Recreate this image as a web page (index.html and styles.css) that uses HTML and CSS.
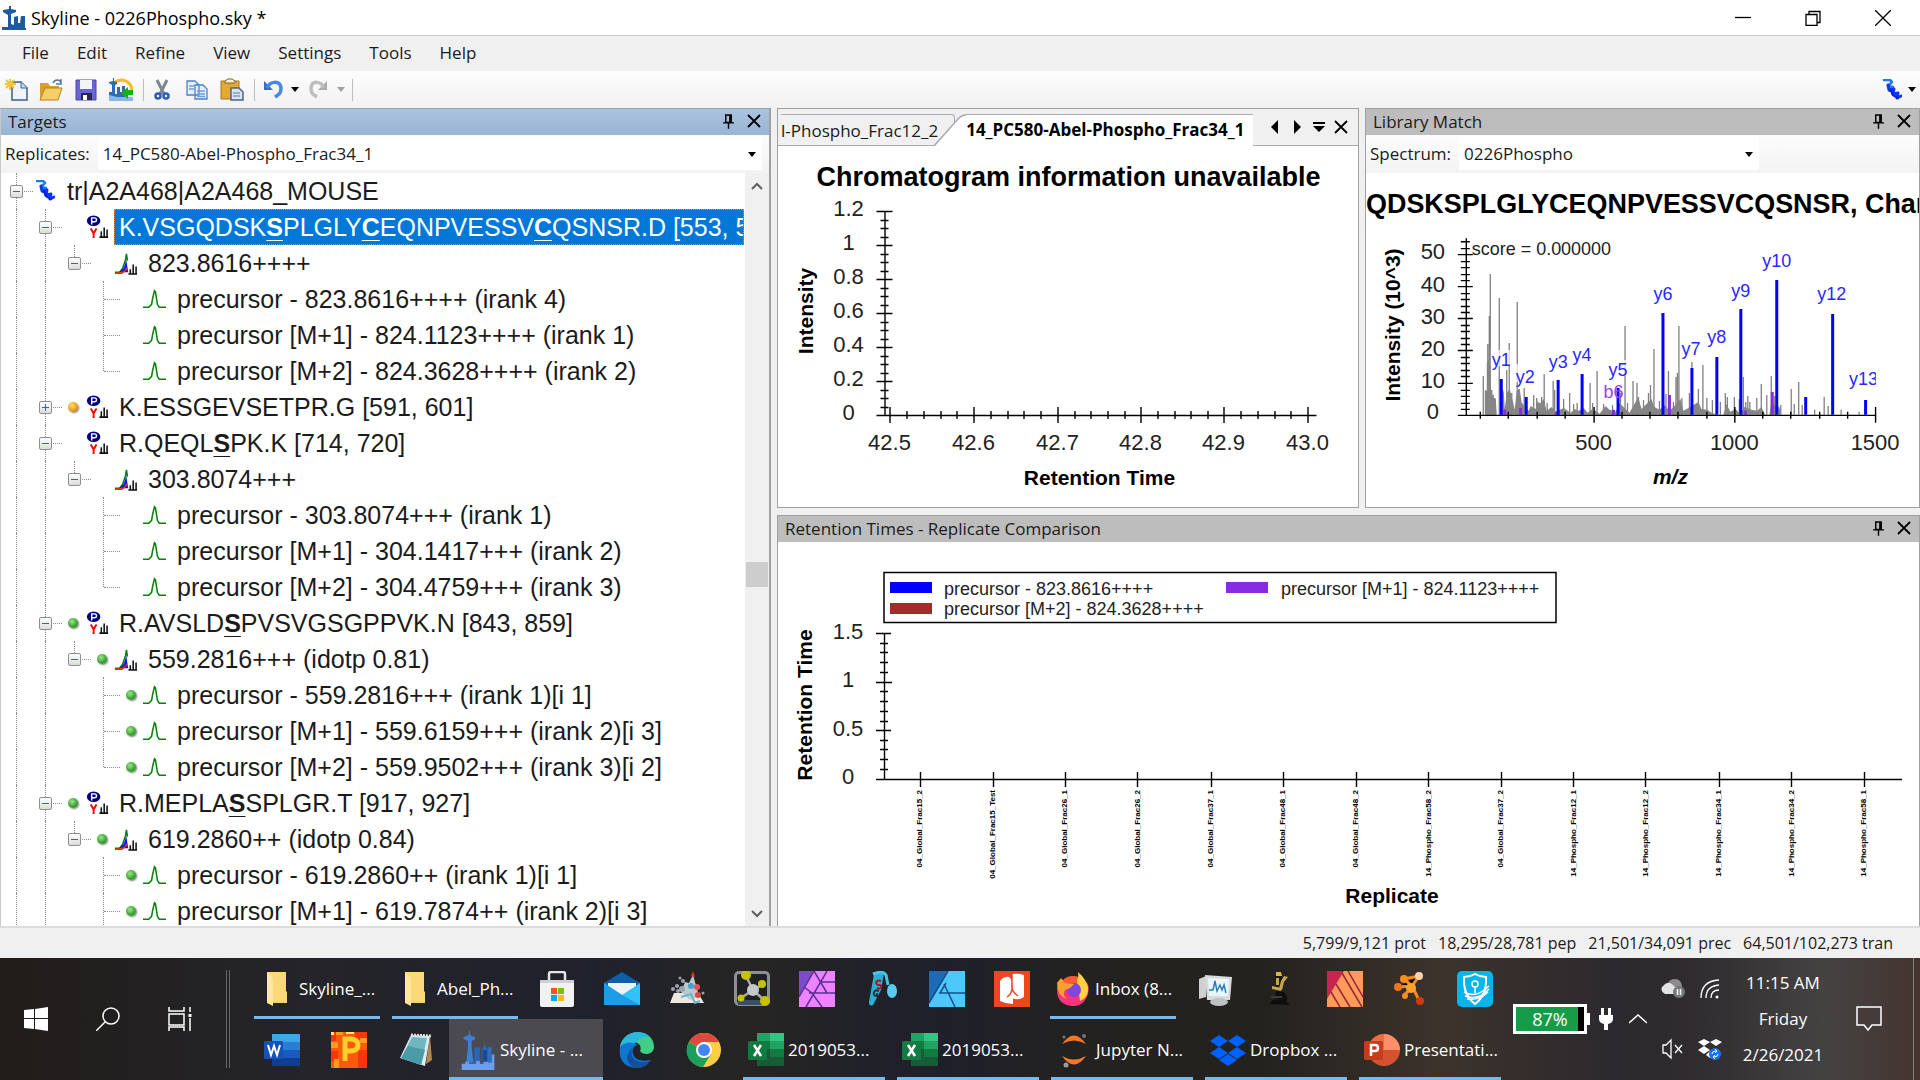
FILE: index.html
```html
<!DOCTYPE html>
<html lang="en">
<head>
    <meta charset="UTF-8">
    <meta name="viewport" content="width=device-width, initial-scale=1.0">
    <title>Skyline - 0226Phospho.sky</title>
    <link rel="stylesheet" href="styles.css">
</head>
<body>
    <!-- shared icons -->
    <svg class="defs" aria-hidden="true">
        <symbol id="skyline" viewBox="0 0 36 44">
            <path d="M8 1h1v3l1 2 5 2v2l-4 2v7l2 17H5l2-17v-7l-5-2V8l5-2 1-2z" fill="#3f7fd0"/>
            <path d="M14 19h6v18h-6zM22 22l2-4 1-3 1 3 4 4v14h-8z" fill="#2c66b8"/>
            <path d="M23 22h5v14h-5z" fill="#1b4c92"/>
            <path d="M0 37h4v-2h4v2h8v-3h4v3h4v-2h9v-8h3v17H0z" fill="#6d9ce8"/>
            <path d="M29 19h4v17h-4z" fill="#2e6fc4"/>
        </symbol>
        <symbol id="protein" viewBox="0 0 20 22">
            <path d="M2 1h6l2 2-4 4 5 1-3 4" fill="none" stroke="#1f7bea" stroke-width="2.500" stroke-linejoin="round" stroke-linecap="round"/>
            <path d="M6 6l1 5 5-1-1 5 5-1-1 5 4-2" fill="none" stroke="#0d36f0" stroke-width="3" stroke-linejoin="round" stroke-linecap="round"/>
            <path d="M9 11l2 5 5 3" fill="none" stroke="#0a22d8" stroke-width="2.500" stroke-linecap="round"/>
        </symbol>
        <symbol id="peptide" viewBox="0 0 24 26">
            <ellipse cx="9" cy="6" rx="7" ry="5.500" fill="#00007f"/>
            <path d="M7 10V3h3a2 2 0 0 1 0 4H7" fill="none" stroke="#fff" stroke-width="1.500"/>
            <path d="M6 14l3 5 3-5M9 19v5" fill="none" stroke="#f00" stroke-width="2"/>
            <path d="M15 23h9M17 23v-6M20 23V13M23 23v-8" stroke="#111" stroke-width="1.600"/>
        </symbol>
        <symbol id="precursor" viewBox="0 0 24 26">
            <path d="M1 22h5l3-4 3-9 1-6 1 7" fill="none" stroke="#0a800a" stroke-width="1.600"/>
            <path d="M5 22l5-4 3-9 1 9 1 4z" fill="#1414ff"/>
            <path d="M1 23h7l3-2 3-4" fill="none" stroke="#e03000" stroke-width="1.600"/>
            <path d="M15 24h9M17 24v-5M20 24V14M23 24v-8" stroke="#111" stroke-width="1.600"/>
        </symbol>
        <symbol id="transition" viewBox="0 0 26 22">
            <path d="M1 19h6l3-3 1-6 2-8 1 1 2 13 2 3h7" fill="none" stroke="#078207" stroke-width="1.600"/>
        </symbol>
        <symbol id="pin" viewBox="0 0 12 16">
            <path d="M3 1h6v8H3zM0 9.500h12M6 10v6M7.500 1v8" fill="none" stroke="#000" stroke-width="1.600"/>
        </symbol>
        <symbol id="close" viewBox="0 0 14 14">
            <path d="M1 1l12 12M13 1L1 13" stroke="#000" stroke-width="1.800"/>
        </symbol>
        <symbol id="folder" viewBox="0 0 36 36">
            <path d="M8 1h19v25l1 0v6H10z" fill="#f7d272"/>
            <path d="M8 1h17l2 1v18l1 1v9H14z" fill="#fbd979"/>
            <path d="M8 1l6 6v28L8 32z" fill="#ffe79c"/>
        </symbol>
        <symbol id="excel" viewBox="0 0 36 36">
            <path d="M9 1h13v8H9z" fill="#21a366"/><path d="M22 1h14v8H22z" fill="#33c481"/>
            <path d="M9 9h13v8H9z" fill="#107c41"/><path d="M22 9h14v8H22z" fill="#21a366"/>
            <path d="M9 17h13v8H9z" fill="#185c37"/><path d="M22 17h14v8H22z" fill="#107c41"/>
            <path d="M9 25h27v9H9z" fill="#185c37"/>
            <rect y="9" width="19" height="19" rx="1.500" fill="#107c41"/>
            <path d="M6 13l7 11M13 13L6 24" stroke="#fff" stroke-width="2.500"/>
        </symbol>
        <symbol id="dropbox" viewBox="0 0 36 32">
            <path d="M9 1l9 6-9 6-9-6zM27 1l9 6-9 6-9-6zM9 13l9 6-9 6-9-6zM27 13l9 6-9 6-9-6zM18 20l9 6-9 6-9-6z"/>
        </symbol>
    </svg>

    <header class="title-bar">
        <svg class="title-icon" viewBox="0 0 24 24"><path d="M7 0h2v3l5 1v2l-5 2v10l3 1v-8l4-1v7h2l1-7h4v12h1v3H0v-4h6V9L1 6V4l6-1z" fill="#1f5a9c"/></svg>
        <h1>Skyline - 0226Phospho.sky *</h1>
        <div class="window-buttons">
            <button aria-label="Minimize"><svg viewBox="0 0 16 16"><path d="M0 7.500h16"/></svg></button>
            <button aria-label="Restore"><svg viewBox="0 0 16 16"><path d="M1 4.500h11v11H1zM4 4V1.500h11v11h-3"/></svg></button>
            <button aria-label="Close window"><svg viewBox="0 0 16 16"><path d="M0 0l16 16M16 0L0 16"/></svg></button>
        </div>
    </header>

    <nav class="menu-bar">
        <button>File</button>
        <button>Edit</button>
        <button>Refine</button>
        <button>View</button>
        <button>Settings</button>
        <button>Tools</button>
        <button>Help</button>
    </nav>

    <div class="toolbar">
        <button class="tool" aria-label="New"><svg viewBox="0 0 24 24"><path d="M8 4h9l6 6v12H8z" fill="#eef4fb" stroke="#3e5f86" stroke-width="1.500"/><path d="M17 4v6h6" fill="#c8d8ea" stroke="#3e5f86"/><path d="M6 1v11M1 6h11M2 2l8 8M10 2l-8 8" stroke="#f2c53a" stroke-width="2"/></svg></button>
        <button class="tool" aria-label="Open"><svg viewBox="0 0 24 24"><path d="M1 5h8l2 3h9v3H6L1 21z" fill="#d99e2e"/><path d="M6 10h17l-4 12H1z" fill="#f6cf66" stroke="#b98120"/><path d="M14 5c2-4 7-4 8 0M22 1v5h-5" fill="none" stroke="#5a7896" stroke-width="1.500"/></svg></button>
        <button class="tool" aria-label="Save"><svg viewBox="0 0 24 24"><path d="M2 2h20v20H2z" fill="#6a65d4" stroke="#4c46b0"/><path d="M6 2h12v9H6z" fill="#f2f4fb"/><path d="M7 15h11v7H7z" fill="#26264e"/><path d="M9 17h4v5H9z" fill="#fff"/></svg></button>
        <button class="tool" aria-label="Import"><svg viewBox="0 0 24 24"><path d="M5 5c7-6 17-2 18 7" fill="none" stroke="#f7b92c" stroke-width="3"/><path d="M4 0h1v3l3 1v2L6 7v9h2V9h3v5h2V8h3v12h7v3H0V14h3V7L0 5V4l4-1z" fill="#2f6db3"/><path d="M0 17l8 2h16v4H0z" fill="#8ab6ea"/><path d="M24 12v5h-5v4l-7-6 7-6v3z" fill="#14b214"/></svg></button>
        <span class="separator"></span>
        <button class="tool" aria-label="Cut"><svg viewBox="0 0 24 24"><path d="M7 2l7 14M17 2l-7 14" stroke="#7b8794" stroke-width="3"/><circle cx="8" cy="18" r="2.500" fill="none" stroke="#2a5fb4" stroke-width="2.500"/><circle cx="16" cy="18" r="2.500" fill="none" stroke="#2a5fb4" stroke-width="2.500"/></svg></button>
        <button class="tool" aria-label="Copy"><svg viewBox="0 0 24 24"><path d="M2 3h8l4 4v10H2zM10 7h8l4 4v10H10z" fill="#e6f0fc" stroke="#4a80c4" stroke-width="1.300"/><path d="M4 8h6M4 11h5M12 13h8M12 16h8M12 18.500h8" stroke="#6f9fdc" stroke-width="1.300"/></svg></button>
        <button class="tool" aria-label="Paste"><svg viewBox="0 0 24 24"><path d="M1 3h18v18H1z" fill="#e0a93a" stroke="#a87619"/><path d="M5 5V3l3-2h4l3 2v2z" fill="#faf0cc" stroke="#7a6330"/><path d="M11 10h8l4 4v8H11z" fill="#d8e4f2" stroke="#4d6685" stroke-width="1.500"/><path d="M13 15h7M13 18h7" stroke="#5b7ca5"/></svg></button>
        <span class="separator"></span>
        <button class="tool" aria-label="Undo"><svg viewBox="0 0 24 24"><path d="M3 3v9h9z" fill="#2f6bd0"/><path d="M6 10c3-7 13-8 14 0 0 6-3 7-6 9" fill="none" stroke="#4c86e4" stroke-width="3.500"/></svg></button>
        <button class="drop" aria-label="Undo list"><span class="caret"></span></button>
        <button class="tool" aria-label="Redo" disabled><svg viewBox="0 0 24 24"><path d="M20 3v9h-9z" fill="#a9a9a9"/><path d="M17 10c-3-7-12-8-13 0 0 6 3 7 6 9" fill="none" stroke="#bdbdbd" stroke-width="3.500"/></svg></button>
        <button class="drop" aria-label="Redo list" disabled><span class="caret muted"></span></button>
        <span class="separator"></span>
        <button class="tool protein-tool" aria-label="Protein"><svg class="protein-icon"><use href="#protein"/></svg><span class="caret"></span></button>
    </div>

    <main class="workspace">
        <section class="panel targets">
            <div class="panel-header active">
                <h2>Targets</h2>
                <button aria-label="Pin"><svg class="pin"><use href="#pin"/></svg></button>
                <button aria-label="Close"><svg class="close"><use href="#close"/></svg></button>
            </div>
            <div class="picker">
                <label for="replicates">Replicates:</label>
                <div class="select-wrap wide">
                    <select id="replicates"><option>14_PC580-Abel-Phospho_Frac34_1</option></select>
                </div>
            </div>
            <div class="tree-area">
                <ul class="tree">
                    <li><span class="guide line stub"><button class="toggle" aria-label="Collapse"></button></span><span class="icon"><svg class="protein-icon"><use href="#protein"/></svg></span><span class="label protein">tr|A2A468|A2A468_MOUSE</span></li>
                    <li><span class="guide line"></span><span class="guide line stub"><button class="toggle" aria-label="Collapse"></button></span><span class="guide"></span><span class="icon"><svg><use href="#peptide"/></svg></span><span class="label selected">K.VSGQDSK<b>S</b>PLGLY<b>C</b>EQNPVESSV<b>C</b>QSNSR.D [553, 578]</span></li>
                    <li><span class="guide line"></span><span class="guide line"></span><span class="guide line last stub"><button class="toggle" aria-label="Collapse"></button></span><span class="guide"></span><span class="icon"><svg><use href="#precursor"/></svg></span><span class="label">823.8616++++</span></li>
                    <li><span class="guide line"></span><span class="guide line"></span><span class="guide"></span><span class="guide line stub"></span><span class="guide"></span><span class="icon"><svg><use href="#transition"/></svg></span><span class="label">precursor - 823.8616++++ (irank 4)</span></li>
                    <li><span class="guide line"></span><span class="guide line"></span><span class="guide"></span><span class="guide line stub"></span><span class="guide"></span><span class="icon"><svg><use href="#transition"/></svg></span><span class="label">precursor [M+1] - 824.1123++++ (irank 1)</span></li>
                    <li><span class="guide line"></span><span class="guide line"></span><span class="guide"></span><span class="guide line last stub"></span><span class="guide"></span><span class="icon"><svg><use href="#transition"/></svg></span><span class="label">precursor [M+2] - 824.3628++++ (irank 2)</span></li>
                    <li><span class="guide line"></span><span class="guide line stub"><button class="toggle plus" aria-label="Expand"></button></span><span class="guide"><i class="dot orange"></i></span><span class="icon"><svg><use href="#peptide"/></svg></span><span class="label">K.ESSGEVSETPR.G [591, 601]</span></li>
                    <li><span class="guide line"></span><span class="guide line stub"><button class="toggle" aria-label="Collapse"></button></span><span class="guide"></span><span class="icon"><svg><use href="#peptide"/></svg></span><span class="label">R.QEQL<b>S</b>PK.K [714, 720]</span></li>
                    <li><span class="guide line"></span><span class="guide line"></span><span class="guide line last stub"><button class="toggle" aria-label="Collapse"></button></span><span class="guide"></span><span class="icon"><svg><use href="#precursor"/></svg></span><span class="label">303.8074+++</span></li>
                    <li><span class="guide line"></span><span class="guide line"></span><span class="guide"></span><span class="guide line stub"></span><span class="guide"></span><span class="icon"><svg><use href="#transition"/></svg></span><span class="label">precursor - 303.8074+++ (irank 1)</span></li>
                    <li><span class="guide line"></span><span class="guide line"></span><span class="guide"></span><span class="guide line stub"></span><span class="guide"></span><span class="icon"><svg><use href="#transition"/></svg></span><span class="label">precursor [M+1] - 304.1417+++ (irank 2)</span></li>
                    <li><span class="guide line"></span><span class="guide line"></span><span class="guide"></span><span class="guide line last stub"></span><span class="guide"></span><span class="icon"><svg><use href="#transition"/></svg></span><span class="label">precursor [M+2] - 304.4759+++ (irank 3)</span></li>
                    <li><span class="guide line"></span><span class="guide line stub"><button class="toggle" aria-label="Collapse"></button></span><span class="guide"><i class="dot"></i></span><span class="icon"><svg><use href="#peptide"/></svg></span><span class="label">R.AVSLD<b>S</b>PVSVGSGPPVK.N [843, 859]</span></li>
                    <li><span class="guide line"></span><span class="guide line"></span><span class="guide line last stub"><button class="toggle" aria-label="Collapse"></button></span><span class="guide"><i class="dot"></i></span><span class="icon"><svg><use href="#precursor"/></svg></span><span class="label">559.2816+++ (idotp 0.81)</span></li>
                    <li><span class="guide line"></span><span class="guide line"></span><span class="guide"></span><span class="guide line stub"></span><span class="guide"><i class="dot"></i></span><span class="icon"><svg><use href="#transition"/></svg></span><span class="label">precursor - 559.2816+++ (irank 1)[i 1]</span></li>
                    <li><span class="guide line"></span><span class="guide line"></span><span class="guide"></span><span class="guide line stub"></span><span class="guide"><i class="dot"></i></span><span class="icon"><svg><use href="#transition"/></svg></span><span class="label">precursor [M+1] - 559.6159+++ (irank 2)[i 3]</span></li>
                    <li><span class="guide line"></span><span class="guide line"></span><span class="guide"></span><span class="guide line last stub"></span><span class="guide"><i class="dot"></i></span><span class="icon"><svg><use href="#transition"/></svg></span><span class="label">precursor [M+2] - 559.9502+++ (irank 3)[i 2]</span></li>
                    <li><span class="guide line"></span><span class="guide line stub"><button class="toggle" aria-label="Collapse"></button></span><span class="guide"><i class="dot"></i></span><span class="icon"><svg><use href="#peptide"/></svg></span><span class="label">R.MEPLA<b>S</b>SPLGR.T [917, 927]</span></li>
                    <li><span class="guide line"></span><span class="guide line"></span><span class="guide line last stub"><button class="toggle" aria-label="Collapse"></button></span><span class="guide"><i class="dot"></i></span><span class="icon"><svg><use href="#precursor"/></svg></span><span class="label">619.2860++ (idotp 0.84)</span></li>
                    <li><span class="guide line"></span><span class="guide line"></span><span class="guide"></span><span class="guide line stub"></span><span class="guide"><i class="dot"></i></span><span class="icon"><svg><use href="#transition"/></svg></span><span class="label">precursor - 619.2860++ (irank 1)[i 1]</span></li>
                    <li><span class="guide line"></span><span class="guide line"></span><span class="guide"></span><span class="guide line stub"></span><span class="guide"><i class="dot"></i></span><span class="icon"><svg><use href="#transition"/></svg></span><span class="label">precursor [M+1] - 619.7874++ (irank 2)[i 3]</span></li>
                </ul>
                <div class="scrollbar">
                    <svg viewBox="0 0 12 8"><path d="M1 7l5-5 5 5"/></svg>
                    <div class="track"><div class="thumb"></div></div>
                    <svg viewBox="0 0 12 8"><path d="M1 1l5 5 5-5"/></svg>
                </div>
            </div>
        </section>

        <section class="panel chromatogram">
            <div class="tabs">
                <button class="tab">l-Phospho_Frac12_2</button>
                <button class="tab current"><svg class="slant" viewBox="0 0 32 32"><path d="M0 32L24 5q4-4 8-4v31z" fill="#fff"/><path d="M0 32L24 5q4-4 8-4" fill="none" stroke="#a9a9b3" stroke-width="1.500"/></svg><span>14_PC580-Abel-Phospho_Frac34_1</span></button>
                <div class="tab-tools">
                    <button aria-label="Previous tab"><svg viewBox="0 0 14 14"><path d="M10 0v14L3 7z"/></svg></button>
                    <button aria-label="Next tab"><svg viewBox="0 0 14 14"><path d="M4 0v14l7-7z"/></svg></button>
                    <button aria-label="Tab list"><svg viewBox="0 0 14 14"><path d="M1 2h12v2H1zM1 6h12l-6 6z"/></svg></button>
                    <button aria-label="Close tab"><svg class="close"><use href="#close"/></svg></button>
                </div>
            </div>
            <svg class="chart" viewBox="0 0 579 361">
                <text class="chart-title" x="290" y="40">Chromatogram information unavailable</text>
                <path class="axis" d="M106.500 65v204.500M98 269.500h440"/>
                <!-- major ticks -->
                <path class="axis" d="M98 65.500h16M98 99.500h16M98 133.500h16M98 167.500h16M98 201.500h16M98 235.500h16M111.500 261v16M195.500 261v16M279.500 261v16M362.500 261v16M445.500 261v16M529.500 261v16"/>
                <!-- minor ticks -->
                <path class="axis" d="M102 74.500h8M102 82.500h8M102 91.500h8M102 108.500h8M102 116.500h8M102 125.500h8M102 142.500h8M102 150.500h8M102 159.500h8M102 176.500h8M102 184.500h8M102 193.500h8M102 210.500h8M102 218.500h8M102 227.500h8M102 244.500h8M102 252.500h8M102 261.500h8"/>
                <path class="axis" d="M128.500 265v8M145.500 265v8M162.500 265v8M178.500 265v8M212.500 265v8M229.500 265v8M245.500 265v8M262.500 265v8M296.500 265v8M312.500 265v8M329.500 265v8M346.500 265v8M379.500 265v8M396.500 265v8M412.500 265v8M429.500 265v8M462.500 265v8M479.500 265v8M496.500 265v8M512.500 265v8"/>
                <g class="tick-label">
                    <text x="70" y="70">1.2</text>
                    <text x="70" y="104">1</text>
                    <text x="70" y="138">0.8</text>
                    <text x="70" y="172">0.6</text>
                    <text x="70" y="206">0.4</text>
                    <text x="70" y="240">0.2</text>
                    <text x="70" y="274">0</text>
                    <text x="111" y="304">42.5</text>
                    <text x="195" y="304">42.6</text>
                    <text x="279" y="304">42.7</text>
                    <text x="362" y="304">42.8</text>
                    <text x="445" y="304">42.9</text>
                    <text x="529" y="304">43.0</text>
                </g>
                <text class="axis-title" x="321" y="339">Retention Time</text>
                <text class="axis-title" transform="translate(34 165) rotate(-90)">Intensity</text>
            </svg>
        </section>

        <section class="panel library">
            <div class="panel-header">
                <h2>Library Match</h2>
                <button aria-label="Pin"><svg class="pin"><use href="#pin"/></svg></button>
                <button aria-label="Close"><svg class="close"><use href="#close"/></svg></button>
            </div>
            <div class="picker">
                <label for="spectrum">Spectrum:</label>
                <div class="select-wrap">
                    <select id="spectrum"><option>0226Phospho</option></select>
                </div>
            </div>
            <svg class="chart" viewBox="0 0 554 334">
                <clipPath id="plot"><path d="M100 60h411v190H100z"/></clipPath>
                <text class="chart-title start" x="0" y="40">QDSKSPLGLYCEQNPVESSVCQSNSR, Charge 4</text>
                <!-- unmatched peaks -->
                <path class="peaks" d="M117.500 242V203M120 242V217M122 242V171M123.500 242V143M124.500 242V101M126 242V217M127.500 242V222M129 242V225M133.500 242V125M137 242V217M141 242V197M143.500 242V170M146 242V220M151.500 242V129M153.500 242V216M156 242V230M158.500 242V215M165 242V234M168 242V222M171 242V225M174 242V230M176 242V224M178.500 242V201M181.500 242V230M187.500 242V208M189 242V217M198 242V226M204 242V220M208 242V231M211.500 242V230M224.500 242V210M227 242V230M231.500 242V198M238 242V231M247 242V232M255 242V220M259.500 242V153M262 242V230M267.500 242V208M271.500 242V210M273 242V224M278 242V227M283 242V220M285 242V212M288.500 242V176M294 242V228M300.500 242V221M303 242V198M308 242V229M310.500 242V204M312 242V200M313.500 242V153M316.500 242V225M324 242V220M326.500 242V189M333 242V216M337.500 242V192M341.500 242V225M347 242V227M355 242V229M360 242V220M362 242V224M369 242V224M374 242V226M378 242V204M380.500 242V229M382.500 242V223M384.500 242V229M391.500 242V225M396 242V211M401.500 242V222M406 242V203M409.500 242V223M415.500 242V232M426 242V216M429 242V231M433.500 242V209M437 242V232M449.500 242V237M459 242V224M463 242V233M476 242V237M494 242V239"/>
                <path class="noise" d="M119 242V218H121V190L123 186L125 216L127 224L130 226L131 242M135 242V222L138 219L139 236L141 220L144 216L147 228L149 237L151 218L154 216L156 230L160 235L163 238L165 233L170 236L172 228L174 231L178 226L181 238L186 234L190 239L198 235L205 240L209 236L213 238L218 235L222 240L226 237L230 238L234 241L240 233L244 237L250 239L254 230L260 236L264 240L270 229L273 225L276 236L280 232L286 226L289 234L294 237L299 232L304 238L310 232L315 226L318 238L323 235L328 232L333 229L336 236L342 237L346 240L352 242M358 242L361 231L365 239L370 236L375 241L379 234L386 237L392 238L396 234L400 242M404 242L406 230L409 232L414 234L416 242z"/>
                <rect x="125" y="177" width="20" height="16" class="label-back"/>
                <rect x="149" y="191" width="20" height="18" class="label-back"/>
                <rect x="242" y="187" width="20" height="16" class="label-back"/>
                <!-- b ions -->
                <path class="ion-b" d="M139 242V237M155 242V235M191 242V239M248 242V237M304 242V222M380 242V238M407 242V219"/>
                <!-- y ions -->
                <path class="ion-y" d="M135.500 242V206M160.500 242V224M192.500 242V207M216.500 242V201M252.500 242V215M297.500 242V140M326.500 242V195M351.500 242V184M375.500 242V136M411.500 242V107M440.500 242V224M467.500 242V141M500.500 242V227"/>
                <g class="ion-label" clip-path="url(#plot)">
                    <text class="b" x="238" y="225">b6</text>
                    <text x="126" y="193">y1</text>
                    <text x="150" y="210">y2</text>
                    <text x="183" y="195">y3</text>
                    <text x="207" y="188">y4</text>
                    <text x="243" y="203">y5</text>
                    <text x="288" y="127">y6</text>
                    <text x="316" y="182">y7</text>
                    <text x="342" y="170">y8</text>
                    <text x="366" y="124">y9</text>
                    <text x="397" y="94">y10</text>
                    <text x="452" y="127">y12</text>
                    <text x="484" y="212">y13</text>
                </g>
                <path class="axis" d="M100.500 65v177.500M92 242.500h419"/>
                <path class="axis" d="M92 81.500h15M92 113.500h15M92 145.500h15M92 177.500h15M92 210.500h15M228.500 234v16M369.500 234v16M510.500 234v16"/>
                <path class="axis" d="M95 68.500h9M95 75.500h9M95 88.500h9M95 94.500h9M95 101.500h9M95 107.500h9M95 120.500h9M95 126.500h9M95 133.500h9M95 139.500h9M95 152.500h9M95 158.500h9M95 165.500h9M95 171.500h9M95 184.500h9M95 190.500h9M95 197.500h9M95 203.500h9M95 217.500h9M95 223.500h9M95 230.500h9M95 236.500h9"/>
                <path class="axis" d="M114.500 239v7M142.500 239v7M171.500 239v7M199.500 239v7M256.500 239v7M284.500 239v7M312.500 239v7M341.500 239v7M397.500 239v7M425.500 239v7M454.500 239v7M482.500 239v7"/>
                <text class="note" x="106" y="82">score = 0.000000</text>
                <g class="tick-label">
                    <text x="67" y="86">50</text>
                    <text x="67" y="119">40</text>
                    <text x="67" y="151">30</text>
                    <text x="67" y="183">20</text>
                    <text x="67" y="215">10</text>
                    <text x="67" y="246">0</text>
                    <text x="228" y="277">500</text>
                    <text x="369" y="277">1000</text>
                    <text x="510" y="277">1500</text>
                </g>
                <text class="axis-title italic" x="305" y="311">m/z</text>
                <text class="axis-title" transform="translate(34 152) rotate(-90)">Intensity (10^3)</text>
            </svg>
        </section>

        <section class="panel retention">
            <div class="panel-header">
                <h2>Retention Times - Replicate Comparison</h2>
                <button aria-label="Pin"><svg class="pin"><use href="#pin"/></svg></button>
                <button aria-label="Close"><svg class="close"><use href="#close"/></svg></button>
            </div>
            <svg class="chart" viewBox="0 0 1141 384">
                <rect x="106" y="30.500" width="672" height="50" fill="#fff" stroke="#000" stroke-width="1.500"/>
                <path fill="#00f" d="M112 40h42v11h-42z"/>
                <path fill="#a52a2a" d="M112 61h42v11h-42z"/>
                <path fill="#8a2be2" d="M448 40h42v11h-42z"/>
                <g class="legend">
                    <text x="166" y="53">precursor - 823.8616++++</text>
                    <text x="166" y="73">precursor [M+2] - 824.3628++++</text>
                    <text x="503" y="53">precursor [M+1] - 824.1123++++</text>
                </g>
                <path class="axis" d="M106.500 91v146.500M98 237.500h1026"/>
                <path class="axis" d="M98 91.500h15M98 140.500h16M98 188.500h15M142.500 230v15M215.500 230v15M287.500 230v15M359.500 230v15M433.500 230v15M505.500 230v15M578.500 230v15M650.500 230v15M723.500 230v15M795.500 230v15M867.500 230v15M941.500 230v15M1013.500 230v15M1086.500 230v15"/>
                <path class="axis" d="M102 101.500h8M102 110.500h8M102 120.500h8M102 130.500h8M102 149.500h8M102 159.500h8M102 169.500h8M102 179.500h8M102 198.500h8M102 207.500h8M102 217.500h8M102 227.500h8"/>
                <g class="tick-label">
                    <text x="70" y="97">1.5</text>
                    <text x="70" y="145">1</text>
                    <text x="70" y="194">0.5</text>
                    <text x="70" y="242">0</text>
                </g>
                <g class="replicate-label">
                    <text transform="translate(144 248) rotate(-90)">04_Global_Frac15_2</text>
                    <text transform="translate(217 248) rotate(-90)">04_Global_Frac15_Test</text>
                    <text transform="translate(289 248) rotate(-90)">04_Global_Frac26_1</text>
                    <text transform="translate(362 248) rotate(-90)">04_Global_Frac26_2</text>
                    <text transform="translate(435 248) rotate(-90)">04_Global_Frac37_1</text>
                    <text transform="translate(507 248) rotate(-90)">04_Global_Frac48_1</text>
                    <text transform="translate(580 248) rotate(-90)">04_Global_Frac48_2</text>
                    <text transform="translate(653 248) rotate(-90)">14_Phospho_Frac58_2</text>
                    <text transform="translate(725 248) rotate(-90)">04_Global_Frac37_2</text>
                    <text transform="translate(798 248) rotate(-90)">14_Phospho_Frac12_1</text>
                    <text transform="translate(870 248) rotate(-90)">14_Phospho_Frac12_2</text>
                    <text transform="translate(943 248) rotate(-90)">14_Phospho_Frac34_1</text>
                    <text transform="translate(1016 248) rotate(-90)">14_Phospho_Frac34_2</text>
                    <text transform="translate(1088 248) rotate(-90)">14_Phospho_Frac58_1</text>
                </g>
                <text class="axis-title" x="614" y="361">Replicate</text>
                <text class="axis-title" transform="translate(34 163) rotate(-90)">Retention Time</text>
            </svg>
        </section>
    </main>

    <footer class="status-bar">
        <span>5,799/9,121 prot</span>
        <span>18,295/28,781 pep</span>
        <span>21,501/34,091 prec</span>
        <span>64,501/102,273 tran</span>
    </footer>

    <div class="taskbar">
        <div class="system">
            <button aria-label="Start"><svg viewBox="0 0 24 24"><path d="M0 3l10-1v9H0zM11 2l13-2v11H11zM0 12h10v10L0 21zM11 12h13v12l-13-2z" fill="#fff"/></svg></button>
            <button aria-label="Search"><svg viewBox="0 0 24 24" fill="none" stroke="#fff" stroke-width="1.500"><circle cx="15" cy="9" r="8"/><path d="M9 15l-9 9"/></svg></button>
            <button aria-label="Task view"><svg viewBox="0 0 24 24" fill="none" stroke="#fff" stroke-width="1.500"><path d="M1 0v4h15V0M1 7h15v11H1zM1 24v-4h15v4M22 0v5M22 11v13"/><path d="M20.500 7h3v3h-3z" fill="#fff" stroke="none"/></svg></button>
        </div>
        <div class="tasks">
            <div class="task-row">
                <button class="task medium running"><svg><use href="#folder"/></svg><span>Skyline_...</span></button>
                <button class="task medium running"><svg><use href="#folder"/></svg><span>Abel_Ph...</span></button>
                <button class="task" aria-label="Store"><svg viewBox="0 0 36 36"><path d="M10 10V3q0-2 2-2h12q2 0 2 2v7" fill="none" stroke="#e6e2e6" stroke-width="2.500"/><path d="M1 9h34v25q0 2-2 2H3q-2 0-2-2z" fill="#f3f2f3"/><path d="M1 9h34v3H1z" fill="#d3ced3"/><path d="M12 17h6v6h-6z" fill="#f35325"/><path d="M19 17h6v6h-6z" fill="#81bc06"/><path d="M12 24h6v6h-6z" fill="#05a6f0"/><path d="M19 24h6v6h-6z" fill="#ffba08"/></svg></button>
                <button class="task" aria-label="Mail"><svg viewBox="0 0 36 36"><path d="M0 12L18 1l18 11v8H0z" fill="#0f5fa8"/><path d="M4 12h28v12H4z" fill="#f1f3f7"/><path d="M0 12l18 12 18-12v22H0z" fill="#2fc3f7"/><path d="M0 12l18 12 18 10H0z" fill="#1c9de6"/></svg></button>
                <button class="task" aria-label="Molecules"><svg viewBox="0 0 36 36"><path d="M5 22h24l6 10H1z" fill="#eee9df"/><path d="M12 21l4-10 4 1 4-8 6 21-9 4z" fill="#bfc8cd"/><path d="M22 5l2-5 2 6z" fill="#d4382c"/><g fill="#9aa4aa"><circle cx="4" cy="18" r="2"/><circle cx="8" cy="15" r="2"/><circle cx="13" cy="18" r="3"/><circle cx="9" cy="20" r="2"/><circle cx="14" cy="10" r="2"/><circle cx="11" cy="7" r="1.500"/><circle cx="34" cy="22" r="1.500"/></g><path d="M12 26l10-3 4 9 5-2" fill="none" stroke="#64b3d9" stroke-width="2"/><circle cx="28" cy="16" r="3" fill="#e25555"/><circle cx="29" cy="24" r="3" fill="#dd4444"/><circle cx="22" cy="15" r="3" fill="#3ea3cf"/></svg></button>
                <button class="task" aria-label="Molecule viewer"><svg viewBox="0 0 36 36"><rect width="36" height="35" rx="5" fill="#8c8f98"/><rect x="3" y="3" width="30" height="29" rx="2" fill="#202122"/><path d="M4 29h28v5H4z" fill="#394f66"/><path d="M19 19L12 5M19 19l9-5M19 19L7 27M19 19l11 10" stroke="#aaa" stroke-width="2.500"/><circle cx="19" cy="19" r="6" fill="#c4c7cc"/><g fill="#c6c200"><circle cx="12" cy="4" r="5"/><circle cx="28" cy="13" r="4"/><circle cx="7" cy="27" r="3.500"/><circle cx="31" cy="30" r="5"/></g></svg></button>
                <button class="task" aria-label="Photo"><svg viewBox="0 0 36 36"><path d="M0 0h36v36H0z" fill="#ee82ff"/><path d="M0 0h15L0 26z" fill="#7d4bcc"/><path d="M15 0L0 26M15 0l13 22M28 0L7 36M5 16l8 6 10 14M36 22H10M21 11h15" fill="none" stroke="#5b2f98" stroke-width="1.500"/></svg></button>
                <button class="task" aria-label="Gene viewer"><svg viewBox="0 0 36 36"><path d="M10 3l10-1-3 17-8 15q-4 2-4-3z" fill="#2eaed1"/><path d="M9 3q10-4 13 1l2 10" fill="none" stroke="#48c4e5" stroke-width="3"/><ellipse cx="28" cy="20" rx="5" ry="7" fill="#5acbee"/><path d="M17 10c-6-2-6 4-2 4s3 5-2 3" fill="none" stroke="#9e1b2c" stroke-width="2"/><path d="M15 20c-6-3-7 6-2 5v-3" fill="none" stroke="#233642" stroke-width="2"/></svg></button>
                <button class="task" aria-label="Designer"><svg viewBox="0 0 36 36"><path d="M0 0h36v36H0z" fill="#4cc8fb"/><path d="M0 0h19L0 32z" fill="#1a6bb8"/><path d="M19 0L0 32M15 13l11 23M10 22h26M11 22l6-10" fill="none" stroke="#174f88" stroke-width="1.500"/></svg></button>
                <button class="task" aria-label="PDF editor"><svg viewBox="0 0 36 36"><path d="M0 0h36v36H0z" fill="#f0461e"/><path d="M18 3q6-1 12 1v22q-6 4-12 1z" fill="#fff"/><path d="M6 10q4-5 9-4 4 4 4 8v19q-7 0-13-3z" fill="#fff"/><path d="M18 3v11q-1 6 6 11M13 26q6-4 5-12" stroke="#f0461e" stroke-width="1.500" fill="none"/></svg></button>
                <button class="task medium running"><svg viewBox="0 0 36 36"><circle cx="18" cy="20" r="15" fill="#ff5a35"/><path d="M18 35Q2 34 2 19q0-5 3-9l3 4 6-2 6 4-2 4 9 3 5-12q4 8-1 16-4 8-13 8z" fill="#f7347d"/><path d="M22 9q2-3 1-8 8 7 10 15 1 10-8 14z" fill="#ffd23e"/><circle cx="19" cy="19" r="7" fill="#7d48dd"/><path d="M2 12l4-5 4 5 9 1-4 4-5 2q-3 5 2 9-10-3-10-16z" fill="#ff9f2e"/></svg><span>Inbox (8...</span></button>
                <button class="task" aria-label="Monitor"><svg viewBox="0 0 36 36"><path d="M2 8l7-3v21l-7 2z" fill="#cfd0cf"/><path d="M8 4l27 2-2 23H10z" fill="#d9dadb"/><path d="M11 7l21 1-1 17H12z" fill="#eaf5fc"/><path d="M12 19h4l2-9 2 10 3-6 2 5 2-5 2 8" fill="none" stroke="#2d7eb5" stroke-width="1.500"/><ellipse cx="22" cy="31" rx="9" ry="4" fill="#bfc1c3"/></svg></button>
                <button class="task" aria-label="Microscope"><svg viewBox="0 0 36 36"><path d="M8 33q1-5 8-5-4-4-2-8l8 1q5 6 2 10l4 3z" fill="#0e0e0e"/><path d="M14 1h5l1 4h-6z" fill="#d8b64e"/><path d="M13 5h7l-1 10h-5z" fill="#1a1712"/><path d="M14 7h3v7h-3zM22 5l4 1-4 5-2 8-3-1 2-8zM10 15l9 2v3l-9-2z" fill="#c7a64a"/><path d="M9 25h11v2H9z" fill="#3c3a33"/></svg></button>
                <button class="task" aria-label="Publisher"><svg viewBox="0 0 36 36"><path d="M0 0h36v36H0z" fill="#ff9a59"/><path d="M0 0h17L0 28z" fill="#c92450"/><path d="M15 2l20 34M21 0l15 26M9 13l14 23M4 21l9 15" stroke="#92263f" stroke-width="1.500"/></svg></button>
                <button class="task" aria-label="Network"><svg viewBox="0 0 36 36"><path d="M6 16l14-1 7-10M20 15L12 8M20 15l7 14M20 17l-8 7M27 5l-15 3" stroke="#f58a1d" stroke-width="3"/><circle cx="27" cy="5" r="4" fill="#ffd3b0"/><circle cx="12" cy="8" r="4" fill="#fb8c20"/><circle cx="6" cy="16" r="4" fill="#f4741a"/><circle cx="19" cy="17" r="5" fill="#ffa22b"/><circle cx="13" cy="25" r="3" fill="#fa8a1c"/><circle cx="28" cy="30" r="4" fill="#cc3d0d"/></svg></button>
                <button class="task" aria-label="Shield"><svg viewBox="0 0 36 36"><rect width="36" height="36" rx="5" fill="#06b6ea"/><path d="M18 3q5 3 11 3 1 18-11 27Q6 24 7 6q6 0 11-3z" fill="none" stroke="#fff" stroke-width="2"/><circle cx="18" cy="13" r="3" fill="none" stroke="#fff" stroke-width="1.500"/><path d="M18 16v6M7 21q12 7 25-6M8 25q13 5 24-7M10 28q12 2 21-7" fill="none" stroke="#fff" stroke-width="1.500"/></svg></button>
            </div>
            <div class="task-row">
                <button class="task roomy" aria-label="Word"><svg viewBox="0 0 36 36"><path d="M8 2h28v8H8z" fill="#41a5ee"/><path d="M8 10h28v8H8z" fill="#2b7cd3"/><path d="M8 18h28v8H8z" fill="#185abd"/><path d="M8 26h28v8H8z" fill="#103f91"/><rect y="9" width="19" height="18" rx="1.500" fill="#1651b5"/><path d="M4 13l3 10 3-9 3 9 3-10" fill="none" stroke="#fff" stroke-width="2"/></svg></button>
                <button class="task roomy" aria-label="P app"><svg viewBox="0 0 36 36"><path d="M0 0h36v36H0z" fill="#fb5a0c"/><path d="M0 0h5v9H0zM0 19h7v10H0zM24 0h12v8H24zM27 18h9v18h-9z" fill="#fa3605"/><path d="M5 0h7v3H5zM29 6h7v5h-7zM3 27h5v9H3zM0 10h7v6H0z" fill="#ff9a1c"/><path d="M0 0h3v3H0zM15 0h8v2h-8z" fill="#ffe76a"/><path d="M14 29V7h5q8 0 8 6t-8 6h-4" fill="none" stroke="#ffd02b" stroke-width="5"/></svg></button>
                <button class="task roomy" aria-label="Notepad"><svg viewBox="0 0 36 36"><path d="M32 4l2 24-6 4z" fill="#b2894e"/><path d="M13 3l19 1-5 30L2 26z" fill="#d9eef0"/><path d="M14 5l15 1-6 27L3 26z" fill="#70b6bf"/><path d="M10 14l17 4-4 15L3 26z" fill="#4a9aa8"/><path d="M13 3l20 1" stroke="#ddd" stroke-width="3" stroke-dasharray="2 1"/></svg></button>
                <button class="task large running focused"><svg class="tall"><use href="#skyline"/></svg><span>Skyline - ...</span></button>
                <button class="task roomy" aria-label="Edge"><svg viewBox="0 0 36 36"><path d="M1 15C4-5 35-4 35 15c0 8-11 9-14 4 4-8-10-14-20-4z" fill="#41cf86"/><path d="M1 15C4-1 23-4 31 5c-8-1-14 4-16 8-5-3-11-1-14 2z" fill="#2bb8dc"/><path d="M1 15q9-8 18-2-7 1-5 9 3 9 18 6-10 12-23 6Q-1 29 1 15z" fill="#0c76d1"/><path d="M13 16q-3 12 9 14 6 1 10-2-8 12-20 6-8-8 1-18z" fill="#124f9c"/></svg></button>
                <button class="task roomy" aria-label="Chrome"><svg viewBox="0 0 36 36"><circle cx="18" cy="18" r="17" fill="#ffce44"/><path d="M18 18L3 10Q8 1 18 1t15 9H18z" fill="#dd4b3e"/><path d="M3 10q-5 9 0 17 5 7 14 8l8-13-7-4z" fill="#1c9f5c"/><circle cx="18" cy="18" r="8" fill="#fff"/><circle cx="18" cy="18" r="6" fill="#4285f4"/></svg></button>
                <button class="task large running"><svg><use href="#excel"/></svg><span>2019053...</span></button>
                <button class="task large running"><svg><use href="#excel"/></svg><span>2019053...</span></button>
                <button class="task large running"><svg viewBox="0 0 36 36"><path d="M6 12q12-17 24 0-12-7-24 0zM6 24q12 17 24 0-12 7-24 0z" fill="#f37726"/><circle cx="28" cy="4" r="2" fill="#767677"/><circle cx="8" cy="5" r="1.500" fill="#767677"/><circle cx="10" cy="33" r="2.500" fill="#9e9e9e"/></svg><span>Jupyter N...</span></button>
                <button class="task large running"><svg class="blue"><use href="#dropbox"/></svg><span>Dropbox ...</span></button>
                <button class="task large running"><svg viewBox="0 0 36 36"><circle cx="20" cy="18" r="16" fill="#d35230"/><path d="M20 2a16 16 0 0 1 16 16H20z" fill="#ff8f6b"/><path d="M20 2v16H4A16 16 0 0 1 20 2z" fill="#ed6c47"/><rect y="9" width="19" height="19" rx="1.500" fill="#c43e1c"/><path d="M7 24V13h4q3 0 3 3t-3 3H8" fill="none" stroke="#fff" stroke-width="2.500"/></svg><span>Presentati...</span></button>
            </div>
        </div>
        <div class="tray">
            <div class="battery"><span>87%</span></div>
            <svg class="plug" viewBox="0 0 14 22"><path d="M2 0h3v7h4V0h3v7h2v4q0 4-5 5v6H5v-6q-5-1-5-5V7h2z" fill="#fff"/></svg>
            <button class="more" aria-label="Show hidden icons"><svg viewBox="0 0 18 10"><path d="M0 9l9-8 9 8" fill="none" stroke="#fff" stroke-width="1.500"/></svg></button>
            <div class="tray-icons">
                <svg viewBox="0 0 24 22"><path d="M6 14Q5 1 14 1q6 0 7 7v7z" fill="#8b8b8d"/><path d="M4 16Q-2 12 2 8q5-6 10-1l6 6v3z" fill="#e3e3e4"/><circle cx="18" cy="14" r="6" fill="#77787a"/><path d="M16.500 11v6M19.500 11v6" stroke="#fff" stroke-width="1.500"/></svg>
                <svg viewBox="0 0 24 22" fill="none" stroke="#fff" stroke-width="1.300"><path d="M3 20Q3 3 21 2M8 20Q8 8 21 7M13 20q0-8 8-8"/><circle cx="19" cy="19" r="1.500" fill="#fff" stroke="none"/></svg>
                <svg viewBox="0 0 24 22" fill="none" stroke="#fff" stroke-width="1.300"><path d="M2 7h3l5-5v18l-5-5H2zM14 7l7 8M21 7l-7 8"/></svg>
                <svg viewBox="0 0 24 22"><path d="M6 1l6 3-6 4-6-4zM18 1l6 3-6 4-6-4zM6 8l6 4-6 4-6-4zM12 13l4 3-4 4-4-3z" fill="#fff"/><circle cx="17" cy="16" r="6" fill="#1672f5"/><path d="M14 16q0-3 4-3M20 16q0 3-4 3M17 11l2 2-2 2M17 17l-2 2 2 2" fill="none" stroke="#fff"/></svg>
            </div>
            <time class="clock"><span>11:15 AM</span><span>Friday</span><span>2/26/2021</span></time>
            <button class="notifications" aria-label="Notifications"><svg viewBox="0 0 26 26"><path d="M1 1h24v18H16l-4 5-4-5H1z" fill="none" stroke="#fff" stroke-width="1.500"/></svg></button>
        </div>
    </div>
</body>
</html>
```
FILE: styles.css
```css
* {
    box-sizing: border-box;
}

body {
    margin: 0;
    height: 100vh;
    display: flex;
    flex-direction: column;
    overflow: hidden;
    background: #f0f0f0;
    color: #1b1b1b;
    font-family: "Open Sans", "Segoe UI", sans-serif;
    font-size: 17px;
}

button, select {
    font: inherit;
    color: inherit;
    background: none;
    border: 0;
    padding: 0;
    margin: 0;
}

button {
    display: flex;
    align-items: center;
}

h1, h2 {
    margin: 0;
    font-size: inherit;
    font-weight: normal;
}

svg {
    display: block;
    flex: none;
}

.defs {
    position: absolute;
    width: 0;
    height: 0;
}

/* Window frame */
.title-bar {
    display: flex;
    align-items: center;
    height: 36px;
    flex: none;
    background: #fff;
    border-bottom: 1px solid #c8c8c8;
    color: #000;
}

.title-bar h1 {
    font-size: 18px;
}

.title-icon {
    width: 24px;
    height: 24px;
    margin: 0 5px 0 2px;
}

.window-buttons {
    display: flex;
    margin-left: auto;
    margin-right: 2px;
}

.window-buttons button {
    width: 70px;
    height: 34px;
    justify-content: center;
}

.window-buttons svg {
    width: 16px;
    height: 16px;
    fill: none;
    stroke: #000;
    stroke-width: 1.3;
}

.menu-bar {
    display: flex;
    height: 35px;
    flex: none;
    padding: 0 0 2px 8px;
}

.menu-bar button {
    padding: 0 14px;
}

.toolbar {
    display: flex;
    align-items: center;
    height: 37px;
    flex: none;
    padding-left: 4px;
    background: linear-gradient(#fdfdfd, #f1f1f1);
}

.tool {
    width: 35px;
    height: 32px;
}

.tool svg {
    width: 24px;
    height: 24px;
}

.drop {
    width: 12px;
    height: 30px;
    margin-left: -5px;
    margin-right: 4px;
}

.caret {
    border: 4px solid transparent;
    border-top: 5px solid #000;
    border-bottom: 0;
}

.caret.muted {
    border-top-color: #a0a0a0;
}

.separator {
    width: 1px;
    height: 22px;
    margin: 0 6px 0 -1px;
    background: #bdbdbd;
}

.protein-tool {
    width: 38px;
    margin-left: auto;
    gap: 6px;
}

.tool .protein-icon,
.icon .protein-icon {
    width: 20px;
    height: 22px;
}

.icon .protein-icon {
    margin-left: 4px;
}

/* Docked panels */
.workspace {
    flex: 1;
    min-height: 0;
    display: grid;
    grid-template-columns: 771fr 582fr 555fr;
    grid-template-rows: 400fr 411fr;
    column-gap: 6px;
    row-gap: 7px;
}

.panel {
    display: flex;
    flex-direction: column;
    min-width: 0;
    min-height: 0;
    overflow: hidden;
    background: #fff;
    border: 1px solid #a0a0a0;
}

.targets {
    grid-row: 1 / 3;
    border-left-color: #c8c8c8;
    border-right-width: 2px;
    border-bottom: 0;
}

.retention {
    grid-column: 2 / 4;
    border-bottom: 0;
}

.panel-header {
    display: flex;
    align-items: center;
    gap: 13px;
    height: 26px;
    flex: none;
    padding: 0 8px 2px 7px;
    background: #bdbdbd;
}

.panel-header.active {
    background: linear-gradient(#a9c3e0, #9ab4d3);
}

.panel-header h2 {
    margin-right: auto;
}

.pin {
    width: 11px;
    height: 15px;
}

.close {
    width: 14px;
    height: 14px;
}

.picker {
    display: flex;
    align-items: center;
    gap: 8px;
    height: 38px;
    flex: none;
    padding: 0 7px 2px 4px;
    background: linear-gradient(#fcfcfc, #f3f3f3);
}

.select-wrap {
    position: relative;
    width: 300px;
    height: 34px;
    background: #fff;
}

.select-wrap.wide {
    flex: 1;
}

.select-wrap::after {
    content: "";
    position: absolute;
    right: 6px;
    top: 16px;
    border: 4px solid transparent;
    border-top: 5px solid #000;
    border-bottom: 0;
}

select {
    appearance: none;
    width: 100%;
    height: 34px;
    padding-left: 5px;
}

/* Targets tree */
.tree-area {
    display: flex;
    flex: 1;
    min-height: 0;
}

.tree {
    flex: 1;
    min-width: 0;
    margin: 0;
    padding: 0 1px 0 1px;
    list-style: none;
    overflow: hidden;
    font-family: "Liberation Sans", Arial, sans-serif;
    font-size: 25px;
    line-height: 36px;
}

.tree li {
    display: flex;
    height: 36px;
    white-space: nowrap;
}

.guide {
    position: relative;
    display: flex;
    align-items: center;
    justify-content: center;
    flex: none;
    width: 29px;
}

.line::before {
    content: "";
    position: absolute;
    left: 14px;
    top: 0;
    bottom: 0;
    border-left: 1px dotted #8c8c8c;
}

.line.last::before {
    bottom: 50%;
}

.stub::after {
    content: "";
    position: absolute;
    left: 15px;
    top: 18px;
    width: 16px;
    border-top: 1px dotted #8c8c8c;
}

.toggle {
    position: relative;
    z-index: 1;
    width: 13px;
    height: 13px;
    border: 1px solid #8f8f8f;
    border-radius: 2px;
    background: linear-gradient(#fff, #dcdcdc);
}

.toggle::before {
    content: "";
    position: absolute;
    left: 2px;
    top: 5px;
    width: 7px;
    height: 1px;
    background: #4360a8;
}

.toggle.plus::after {
    content: "";
    position: absolute;
    left: 5px;
    top: 2px;
    width: 1px;
    height: 7px;
    background: #4360a8;
}

.dot {
    width: 10px;
    height: 10px;
    margin-right: 3px;
    border-radius: 50%;
    background: radial-gradient(circle at 40% 35%, #9be88c, #36a02c 60%, #1f6a1a);
    box-shadow: 1px 1px 2px #777;
}

.dot.orange {
    background: radial-gradient(circle at 40% 35%, #ffe27a, #e89a10 60%, #9a5f00);
}

.icon {
    display: flex;
    align-items: center;
    flex: none;
    width: 29px;
}

.icon svg {
    width: 25px;
    height: 25px;
    margin-left: -5px;
}

.label {
    padding-left: 1px;
}

.label b {
    text-decoration: underline;
    text-underline-offset: 4px;
    text-decoration-thickness: 1px;
}

.label.protein {
    padding-left: 7px;
}

.label.selected {
    flex: 1;
    min-width: 0;
    overflow: hidden;
    margin-left: -4px;
    padding-left: 4px;
    border: 1px dotted #e08a3c;
    line-height: 34px;
    background: #0078d7;
    color: #fff;
}

.scrollbar {
    display: flex;
    flex-direction: column;
    align-items: center;
    width: 24px;
    flex: none;
    padding: 9px 0 8px;
    background: #f0f0f0;
}

.scrollbar svg {
    width: 12px;
    height: 8px;
    fill: none;
    stroke: #606060;
    stroke-width: 2;
}

.track {
    display: flex;
    flex-direction: column;
    flex: 1;
    width: 22px;
    padding-top: 372px;
}

.thumb {
    height: 25px;
    background: #cdcdcd;
}

/* Chromatogram tabs */
.tabs {
    display: flex;
    align-items: flex-end;
    height: 37px;
    flex: none;
    padding-left: 3px;
    background: #f0f0f0;
    border-bottom: 1px solid #a9a9b3;
}

.tab {
    height: 31px;
    border-top: 1px solid #a9a9b3;
    white-space: nowrap;
}

.tab:first-child {
    padding-right: 16px;
    border-right: 1px solid #a9a9b3;
    border-top-right-radius: 4px;
}

.tab.current {
    flex: none;
    height: 32px;
    margin: 0 0 -1px -21px;
    border: 0;
    font-weight: bold;
    color: #000;
}

.slant {
    width: 32px;
    height: 32px;
}

.tab.current span {
    height: 32px;
    padding-right: 9px;
    border-top: 1px solid #a9a9b3;
    background: #fff;
    line-height: 30px;
}

.tab-tools {
    display: flex;
    gap: 8px;
    align-self: center;
    margin: 0 10px 0 auto;
}

.tab-tools svg {
    width: 14px;
    height: 14px;
}

/* Charts */
.chart {
    flex: 1;
    width: 100%;
    min-height: 0;
    font-family: "Liberation Sans", Arial, sans-serif;
}

.chart-title {
    font-size: 27px;
    font-weight: bold;
    text-anchor: middle;
    fill: #000;
}

.chart-title.start {
    text-anchor: start;
}

.axis {
    fill: none;
    stroke: #000;
    stroke-width: 1.4;
}

.axis-title {
    font-size: 21px;
    font-weight: bold;
    text-anchor: middle;
    fill: #000;
}

.axis-title.italic {
    font-style: italic;
}

.tick-label {
    font-size: 22px;
    text-anchor: middle;
    fill: #222;
}

.replicate-label {
    font-size: 8px;
    font-weight: bold;
    text-anchor: end;
}

.legend,
.note,
.ion-label {
    font-size: 18px;
    fill: #222;
}

.ion-label {
    fill: #2828ff;
}

.ion-label .b {
    fill: #a040e8;
}

.peaks {
    stroke: #808080;
    stroke-width: 1.3;
}

.noise {
    fill: #858585;
}

.label-back {
    fill: #fff;
    opacity: 0.7;
}

.ion-b {
    stroke: #8a2be2;
    stroke-width: 3;
}

.ion-y {
    stroke: #00f;
    stroke-width: 3;
}

.status-bar {
    display: flex;
    align-items: center;
    justify-content: flex-end;
    gap: 12px;
    height: 32px;
    flex: none;
    padding-right: 27px;
    border-top: 2px solid #dcdcdc;
    font-size: 16px;
}

/* Taskbar */
.taskbar {
    display: flex;
    height: 122px;
    flex: none;
    color: #fff;
    background: linear-gradient(90deg, #211d1a 0%, #242429 16%, #1f212c 31%, #262523 39%, #1e202b 48%, #24221f 58%, #24221f 66%, #3c332b 75%, #352e2c 79%, #2c292e 84%, #2f2b2f 88%, #444342 95%, #453430 100%);
}

.system {
    display: flex;
    align-items: center;
    width: 230px;
    flex: none;
    margin: 12px 18px 12px 0;
    border-right: 4px double #66666a;
}

.system button {
    width: 72px;
    justify-content: center;
}

.system svg {
    width: 24px;
    height: 24px;
}

.task-row {
    display: flex;
    height: 61px;
}

.task {
    position: relative;
    justify-content: center;
    width: 65px;
    height: 61px;
    white-space: nowrap;
}

.task.roomy {
    width: 67px;
}

.task svg {
    width: 36px;
    height: 36px;
}

.task .tall {
    height: 40px;
}

.task .blue {
    fill: #0061fe;
}

.task.medium,
.task.large {
    justify-content: flex-start;
    gap: 4px;
    padding-left: 11px;
    width: 138px;
}

.task.large {
    width: 154px;
}

.running::after {
    content: "";
    position: absolute;
    left: 6px;
    right: 6px;
    bottom: 0;
    height: 3px;
    background: #76b9ed;
}

.focused {
    background: #4a4a50;
}

.focused::after {
    left: 0;
    right: 0;
}

.tray {
    display: flex;
    align-items: center;
    margin-left: auto;
    padding-right: 31px;
    border-right: 1px solid #8a8583;
    margin-right: 6px;
}

.battery {
    position: relative;
    width: 74px;
    height: 30px;
    border: 3px solid #fff;
    background: linear-gradient(90deg, #169c49 91%, #000 91%);
    line-height: 24px;
    font-size: 18px;
    text-align: center;
}

.battery::after {
    content: "";
    position: absolute;
    right: -6px;
    top: 6px;
    width: 3px;
    height: 12px;
    background: #fff;
}

.plug {
    width: 14px;
    height: 22px;
    margin: 0 16px 0 12px;
}

.more svg {
    width: 18px;
    height: 10px;
}

.tray-icons {
    display: grid;
    grid-template-columns: 24px 24px;
    gap: 38px 13px;
    margin: 0 18px 0 14px;
}

.tray-icons svg {
    width: 24px;
    height: 22px;
}

.clock {
    display: flex;
    flex-direction: column;
    width: 86px;
    line-height: 36px;
    text-align: center;
}

.notifications {
    margin-left: 30px;
}

.notifications svg {
    width: 26px;
    height: 26px;
}
```
